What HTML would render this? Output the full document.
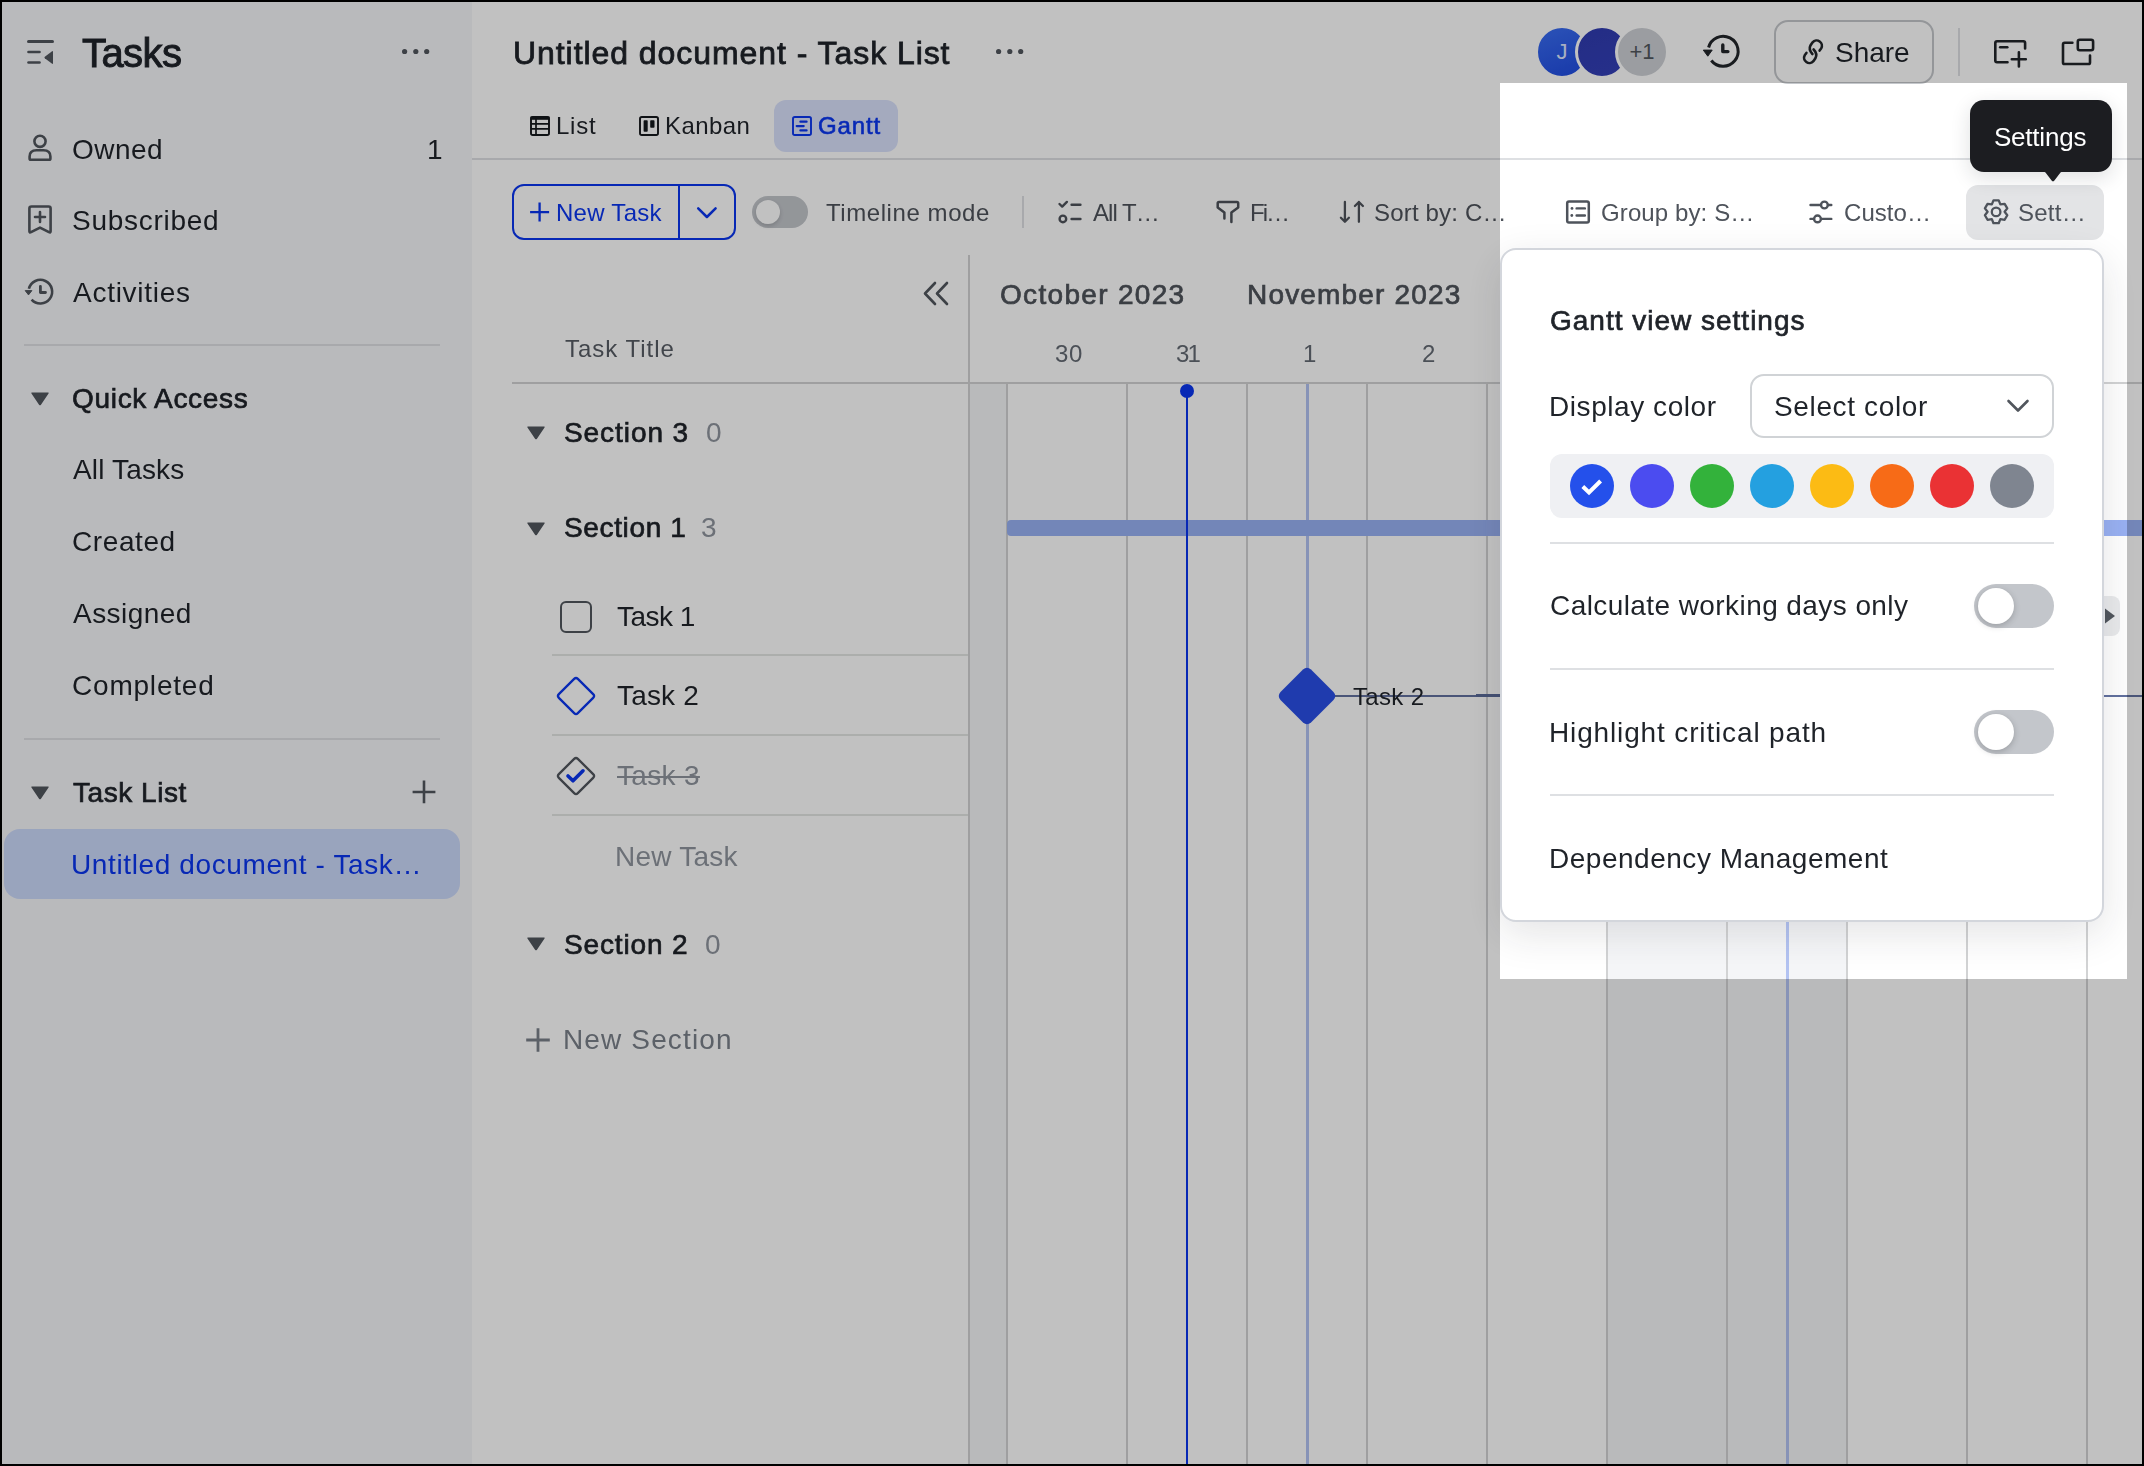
<!DOCTYPE html>
<html><head><meta charset="utf-8"><style>
html,body{margin:0;padding:0}
body{width:2144px;height:1466px;overflow:hidden;position:relative;background:#fff;font-family:"Liberation Sans",sans-serif}
.a{position:absolute}
.t{position:absolute;white-space:nowrap;line-height:1;will-change:transform}
</style></head><body>
<div class="a" style="left:0px;top:0px;width:472px;height:1466px;background:#f5f6f9"></div>
<svg class="a" style="left:24px;top:36px;" width="32" height="32" viewBox="0 0 32 32">
<path d="M4.5 5.5H28.5" stroke="#51565d" stroke-width="3" stroke-linecap="round"/>
<path d="M4.5 16H15.5" stroke="#51565d" stroke-width="2.6" stroke-linecap="round"/>
<path d="M4.5 26.5H15.5" stroke="#51565d" stroke-width="2.6" stroke-linecap="round"/>
<path d="M29 15.5V27Q29 28.5 27.8 27.6L20.8 22.3Q20 21.5 20.8 20.8L27.8 15.4Q29 14.5 29 15.5Z" fill="#51565d"/>
</svg>
<div id="t1" class="t" style="left:81.50px;top:33.14px;font-size:40px;color:#1f2329;font-weight:400;letter-spacing:-0.562px;-webkit-text-stroke:1.00px #1f2329;">Tasks</div>
<svg class="a" style="left:398px;top:45px;" width="36" height="14" viewBox="0 0 36 14"><circle cx="6.6" cy="6.5" r="2.6" fill="#51565d"/><circle cx="17.8" cy="6.5" r="2.6" fill="#51565d"/><circle cx="28.7" cy="6.5" r="2.6" fill="#51565d"/></svg>
<svg class="a" style="left:26px;top:132px;" width="28" height="32" viewBox="0 0 28 32">
<circle cx="14" cy="9.3" r="5.6" fill="none" stroke="#51565d" stroke-width="2.6"/>
<path d="M3.6 26.5V24.5Q3.6 18.3 10.5 18.3H17.5Q24.4 18.3 24.4 24.5V26.5Q24.4 27.8 23.1 27.8H4.9Q3.6 27.8 3.6 26.5Z" fill="none" stroke="#51565d" stroke-width="2.6"/>
</svg>
<div id="t2" class="t" style="left:72.00px;top:135.60px;font-size:28px;color:#1f2329;font-weight:400;letter-spacing:0.464px;">Owned</div>
<div id="t3" class="t" style="left:426.50px;top:135.60px;font-size:28px;color:#1f2329;font-weight:400;letter-spacing:0.000px;">1</div>
<svg class="a" style="left:26px;top:203px;" width="28" height="34" viewBox="0 0 28 34">
<path d="M5.5 3.5H22.6Q24.6 3.5 24.6 5.5V28.3Q24.6 30 23 29.2L14 24.6L5 29.2Q3.4 30 3.4 28.3V5.5Q3.4 3.5 5.5 3.5Z" fill="none" stroke="#51565d" stroke-width="2.6" stroke-linejoin="round"/>
<path d="M14 9V19M9 14H19" stroke="#51565d" stroke-width="2.6" stroke-linecap="round"/>
</svg>
<div id="t4" class="t" style="left:72.00px;top:207.10px;font-size:28px;color:#1f2329;font-weight:400;letter-spacing:0.721px;">Subscribed</div>
<svg class="a" style="left:24px;top:276px;" width="32" height="32" viewBox="0 0 32 32">
<path d="M7.6 23.6A11.8 11.8 0 1 0 4.9 12.8" fill="none" stroke="#51565d" stroke-width="2.6"/>
<path d="M1.2 14.6H7.9L4.5 18.9Z" fill="#51565d" stroke="#51565d" stroke-width="1" stroke-linejoin="round"/>
<path d="M16.4 10.3V16.5H21.5" fill="none" stroke="#51565d" stroke-width="2.8" stroke-linecap="round" stroke-linejoin="round"/>
</svg>
<div id="t5" class="t" style="left:73.00px;top:278.80px;font-size:28px;color:#1f2329;font-weight:400;letter-spacing:0.726px;">Activities</div>
<div class="a" style="left:24px;top:344px;width:416px;height:2px;background:#dee0e3"></div>
<svg class="a" style="left:30px;top:390.6px;" width="20" height="16" viewBox="0 0 20 16"><path d="M1.95 1.5H18.05Q19.25 1.5 18.55 2.5L10.8 13.9Q10 14.8 9.2 13.9L1.45 2.5Q0.75 1.5 1.95 1.5Z" fill="#51565d"/></svg>
<div id="t6" class="t" style="left:72.35px;top:384.60px;font-size:28px;color:#1f2329;font-weight:400;letter-spacing:0.700px;-webkit-text-stroke:0.70px #1f2329;">Quick Access</div>
<div id="t7" class="t" style="left:73.00px;top:456.30px;font-size:28px;color:#1f2329;font-weight:400;letter-spacing:0.166px;">All Tasks</div>
<div id="t8" class="t" style="left:72.00px;top:528.10px;font-size:28px;color:#1f2329;font-weight:400;letter-spacing:0.593px;">Created</div>
<div id="t9" class="t" style="left:73.00px;top:600.10px;font-size:28px;color:#1f2329;font-weight:400;letter-spacing:0.455px;">Assigned</div>
<div id="t10" class="t" style="left:72.00px;top:672.20px;font-size:28px;color:#1f2329;font-weight:400;letter-spacing:0.796px;">Completed</div>
<div class="a" style="left:24px;top:738px;width:416px;height:2px;background:#dee0e3"></div>
<svg class="a" style="left:30px;top:784.6px;" width="20" height="16" viewBox="0 0 20 16"><path d="M1.95 1.5H18.05Q19.25 1.5 18.55 2.5L10.8 13.9Q10 14.8 9.2 13.9L1.45 2.5Q0.75 1.5 1.95 1.5Z" fill="#51565d"/></svg>
<div id="t11" class="t" style="left:73.35px;top:778.70px;font-size:28px;color:#1f2329;font-weight:400;letter-spacing:0.544px;-webkit-text-stroke:0.70px #1f2329;">Task List</div>
<svg class="a" style="left:410px;top:778px;" width="28" height="28" viewBox="0 0 28 28"><path d="M14 2.4V25.3M2.6 14H25.4" stroke="#51565d" stroke-width="2.6"/></svg>
<div class="a" style="left:4px;top:829px;width:456px;height:70px;background:#cbd9fa;border-radius:16px"></div>
<div id="t12" class="t" style="left:71.00px;top:850.80px;font-size:28px;color:#0a36f0;font-weight:400;letter-spacing:0.619px;">Untitled document - Task…</div>
<div id="t13" class="t" style="left:513.40px;top:36.91px;font-size:32px;color:#1f2329;font-weight:400;letter-spacing:0.937px;-webkit-text-stroke:0.80px #1f2329;">Untitled document - Task List</div>
<svg class="a" style="left:992px;top:45px;" width="36" height="14" viewBox="0 0 36 14"><circle cx="6.6" cy="6.5" r="2.6" fill="#51565d"/><circle cx="17.8" cy="6.5" r="2.6" fill="#51565d"/><circle cx="28.7" cy="6.5" r="2.6" fill="#51565d"/></svg>
<svg class="a" style="left:526px;top:112px;" width="28" height="28" viewBox="526 112 28 28">
<rect x="531" y="117" width="18" height="18" rx="1.8" fill="none" stroke="#15181c" stroke-width="1.9"/>
<rect x="530.5" y="116.5" width="19" height="3.3" fill="#15181c"/>
<path d="M531 123.9H549M531 128.9H549M536 117V135" stroke="#15181c" stroke-width="1.7"/>
</svg>
<div id="t14" class="t" style="left:556.00px;top:114.38px;font-size:24px;color:#1f2329;font-weight:400;letter-spacing:0.773px;">List</div>
<svg class="a" style="left:635px;top:112px;" width="28" height="28" viewBox="635 112 28 28">
<rect x="640" y="117" width="18" height="18" rx="1.8" fill="none" stroke="#15181c" stroke-width="1.9"/>
<rect x="643.6" y="120.2" width="4.1" height="11.5" rx="0.8" fill="#15181c"/>
<rect x="650.2" y="120.2" width="4.3" height="7.6" rx="0.8" fill="#15181c"/>
</svg>
<div id="t15" class="t" style="left:665.00px;top:114.38px;font-size:24px;color:#1f2329;font-weight:400;letter-spacing:0.440px;">Kanban</div>
<div class="a" style="left:774px;top:100px;width:124px;height:52px;background:#d9e1fc;border-radius:12px"></div>
<svg class="a" style="left:788px;top:112px;" width="28" height="28" viewBox="788 112 28 28">
<rect x="793" y="117" width="18" height="18" rx="1.8" fill="none" stroke="#0a36f0" stroke-width="1.9"/>
<path d="M800.4 121.7H806.6M796.7 126.1H803.7M800.4 130.4H806.6" stroke="#0a36f0" stroke-width="2.2" stroke-linecap="round"/>
</svg>
<div id="t16" class="t" style="left:818.30px;top:114.38px;font-size:24px;color:#0a36f0;font-weight:400;letter-spacing:0.842px;-webkit-text-stroke:0.60px #0a36f0;">Gantt</div>
<div class="a" style="left:472px;top:158px;width:1672px;height:2px;background:#dee0e3"></div>
<div class="a" style="left:1535px;top:25px;width:48px;height:48px;border-radius:50%;border:3px solid #fff;background:linear-gradient(160deg,#3a6df2,#1f4be0);color:#dfe8ff;font-size:22px;line-height:48px;text-align:center">J</div>
<div class="a" style="left:1575px;top:25px;width:48px;height:48px;border-radius:50%;border:3px solid #fff;background:linear-gradient(160deg,#2f3bb0,#3440b8);color:#fff;font-size:22px;line-height:48px;text-align:center"></div>
<div class="a" style="left:1615px;top:25px;width:48px;height:48px;border-radius:50%;border:3px solid #fff;background:#cdd0d5;color:#51565d;font-size:22px;line-height:48px;text-align:center">+1</div>
<svg class="a" style="left:1698px;top:30px;" width="48" height="44" viewBox="1698 30 48 44">
<path d="M1711.3 60.5A15 15 0 1 0 1708.6 47.5" fill="none" stroke="#22252a" stroke-width="3"/>
<path d="M1703.3 50.1H1712.2L1707.8 56.2Z" fill="#22252a" stroke="#22252a" stroke-width="1" stroke-linejoin="round"/>
<path d="M1722.8 45V51.6H1727.9" fill="none" stroke="#22252a" stroke-width="3.4" stroke-linecap="round" stroke-linejoin="round"/>
</svg>
<div class="a" style="left:1774px;top:20px;width:160px;height:64px;border:2px solid #c4c7cb;border-radius:14px;box-sizing:border-box"></div>
<svg class="a" style="left:1798px;top:36px;" width="30" height="32" viewBox="1798 36 30 32">
<path d="M1819.6 50.6L1821.2 48.4A5.3 5.3 0 0 0 1812.6 42.3L1810.6 45.2Q1808.2 49.6 1812.4 54" fill="none" stroke="#22252a" stroke-width="2.6" stroke-linecap="round"/>
<path d="M1806.4 52.9L1804.8 55.1A5.3 5.3 0 0 0 1813.4 61.2L1815.4 58.3Q1817.8 53.9 1813.6 49.5" fill="none" stroke="#22252a" stroke-width="2.6" stroke-linecap="round"/>
</svg>
<div id="t17" class="t" style="left:1834.50px;top:38.50px;font-size:28px;color:#1f2329;font-weight:400;letter-spacing:-0.036px;">Share</div>
<div class="a" style="left:1958px;top:28px;width:2px;height:48px;background:#dee0e3"></div>
<svg class="a" style="left:1988px;top:34px;" width="44" height="38" viewBox="1988 34 44 38">
<path d="M2007.5 62.3H1997Q1995.3 62.3 1995.3 60.6V43Q1995.3 41.3 1997 41.3H2023.4Q2025.1 41.3 2025.1 43V48.5" fill="none" stroke="#22252a" stroke-width="2.6" stroke-linecap="round"/>
<path d="M2000.2 47.3H2007.3" stroke="#22252a" stroke-width="2.6" stroke-linecap="round"/>
<path d="M2018.9 52.3V66.4M2011.8 59.2H2025.8" stroke="#22252a" stroke-width="2.6" stroke-linecap="round"/>
</svg>
<svg class="a" style="left:2056px;top:34px;" width="44" height="38" viewBox="2056 34 44 38">
<path d="M2072.4 42.8H2064.6Q2063 42.8 2063 44.4V62.4Q2063 64 2064.6 64H2088.4Q2090 64 2090 62.4V55.6" fill="none" stroke="#22252a" stroke-width="2.6" stroke-linecap="round"/>
<rect x="2077.8" y="39.7" width="15.3" height="10.5" rx="2" fill="none" stroke="#22252a" stroke-width="2.6"/>
</svg>
<div class="a" style="left:512px;top:184px;width:224px;height:56px;border:2px solid #0a36f0;border-radius:12px;box-sizing:border-box"></div>
<div class="a" style="left:678px;top:184px;width:2px;height:56px;background:#0a36f0"></div>
<svg class="a" style="left:524px;top:198px;" width="32" height="30" viewBox="524 198 32 30"><path d="M539.6 202.6V221.6M530.1 212.1H549.1" stroke="#0a36f0" stroke-width="2.3"/></svg>
<div id="t18" class="t" style="left:556.30px;top:200.88px;font-size:24px;color:#0a36f0;font-weight:400;letter-spacing:0.282px;">New Task</div>
<svg class="a" style="left:690px;top:200px;" width="34" height="26" viewBox="690 200 34 26"><path d="M698.2 208.3L706.9 217L715.6 208.3" fill="none" stroke="#0a36f0" stroke-width="2.5" stroke-linecap="round" stroke-linejoin="round"/></svg>
<div class="a" style="left:752px;top:196px;width:56px;height:32px;border-radius:16px;background:#c3c6cb"></div>
<div class="a" style="left:756px;top:200px;width:24px;height:24px;border-radius:50%;background:#fff;box-shadow:0 2px 4px rgba(31,35,41,.2)"></div>
<div id="t19" class="t" style="left:825.50px;top:200.68px;font-size:24px;color:#4e535b;font-weight:400;letter-spacing:0.570px;">Timeline mode</div>
<div class="a" style="left:1022px;top:196px;width:2px;height:32px;background:#dee0e3"></div>
<svg class="a" style="left:1052px;top:194px;" width="36" height="36" viewBox="1052 194 36 36">
<path d="M1059.5 204L1062.2 206.6L1066.9 201.9" fill="none" stroke="#4e535b" stroke-width="2.4" stroke-linecap="round" stroke-linejoin="round"/>
<path d="M1071.6 204.7H1080.4M1071.6 218.9H1080.4" stroke="#4e535b" stroke-width="2.5" stroke-linecap="round"/>
<circle cx="1062.9" cy="218.9" r="3.3" fill="none" stroke="#4e535b" stroke-width="2.4"/>
</svg>
<div id="t20" class="t" style="left:1093.20px;top:201.38px;font-size:24px;color:#4e535b;font-weight:400;letter-spacing:-0.960px;">All T…</div>
<svg class="a" style="left:1210px;top:194px;" width="36" height="36" viewBox="1210 194 36 36">
<path d="M1231.4 222V212.6L1238.2 207.6V203.2Q1238.2 201.9 1236.9 201.9H1219Q1217.7 201.9 1217.7 203.2V207.6L1224.4 212.6V218.4" fill="none" stroke="#4e535b" stroke-width="2.5" stroke-linecap="round" stroke-linejoin="round"/>
</svg>
<div id="t21" class="t" style="left:1250.00px;top:201.38px;font-size:24px;color:#4e535b;font-weight:400;letter-spacing:-1.996px;">Fi…</div>
<svg class="a" style="left:1334px;top:194px;" width="36" height="36" viewBox="1334 194 36 36">
<path d="M1344.9 202V221.8M1340.9 217.8L1344.9 221.8L1348.9 217.8" fill="none" stroke="#4e535b" stroke-width="2.3" stroke-linecap="round" stroke-linejoin="round"/>
<path d="M1358.9 221.8V202M1354.9 206L1358.9 202L1362.9 206" fill="none" stroke="#4e535b" stroke-width="2.3" stroke-linecap="round" stroke-linejoin="round"/>
</svg>
<div id="t22" class="t" style="left:1374.30px;top:201.38px;font-size:24px;color:#4e535b;font-weight:400;letter-spacing:0.180px;">Sort by: C…</div>
<svg class="a" style="left:1560px;top:194px;" width="36" height="36" viewBox="1560 194 36 36">
<rect x="1567.2" y="201.4" width="21.6" height="21.2" rx="1.8" fill="none" stroke="#4e535b" stroke-width="2.5"/>
<circle cx="1572" cy="208.4" r="1.4" fill="#4e535b"/><circle cx="1571.8" cy="215.5" r="1.4" fill="#4e535b"/>
<path d="M1576.6 208.4H1584.9M1576.6 215.5H1584.9" stroke="#4e535b" stroke-width="2.4" stroke-linecap="round"/>
</svg>
<div id="t23" class="t" style="left:1600.50px;top:201.38px;font-size:24px;color:#4e535b;font-weight:400;letter-spacing:0.113px;">Group by: S…</div>
<svg class="a" style="left:1804px;top:194px;" width="36" height="36" viewBox="1804 194 36 36">
<path d="M1810.5 205H1820.2M1828.6 205H1831.3M1810.5 218.9H1813.3M1821.7 218.9H1831.3" stroke="#4e535b" stroke-width="2.4" stroke-linecap="round"/>
<circle cx="1824.4" cy="205" r="3.4" fill="none" stroke="#4e535b" stroke-width="2.4"/>
<circle cx="1817.5" cy="218.9" r="3.4" fill="none" stroke="#4e535b" stroke-width="2.4"/>
</svg>
<div id="t24" class="t" style="left:1843.50px;top:201.38px;font-size:24px;color:#4e535b;font-weight:400;letter-spacing:0.061px;">Custo…</div>
<div class="a" style="left:1966px;top:185px;width:138px;height:55px;background:#e3e4e6;border-radius:12px"></div>
<svg class="a" style="left:1980px;top:196px;" width="32" height="32" viewBox="1980 196 32 32">
<path d="M1993.47 200.40L1998.73 200.40L2000.35 204.44L2004.66 203.82L2007.29 208.38L2004.60 211.80L2007.29 215.22L2004.66 219.78L2000.35 219.16L1998.73 223.20L1993.47 223.20L1991.85 219.16L1987.54 219.78L1984.91 215.22L1987.60 211.80L1984.91 208.38L1987.54 203.82L1991.85 204.44Z" fill="none" stroke="#4e535b" stroke-width="2.3" stroke-linejoin="round"/>
<circle cx="1996.1" cy="211.9" r="4.3" fill="none" stroke="#4e535b" stroke-width="2.3"/>
</svg>
<div id="t25" class="t" style="left:2018.00px;top:201.38px;font-size:24px;color:#4e535b;font-weight:400;letter-spacing:0.252px;">Sett…</div>
<svg class="a" style="left:920px;top:280px;" width="32" height="28" viewBox="0 0 32 28"><path d="M15 3L5 13.5L15 24M27 3L17 13.5L27 24" fill="none" stroke="#51565d" stroke-width="2.6" stroke-linecap="round" stroke-linejoin="round"/></svg>
<div id="t26" class="t" style="left:565.00px;top:336.98px;font-size:24px;color:#575c64;font-weight:400;letter-spacing:0.987px;">Task Title</div>
<div class="a" style="left:512px;top:382px;width:1632px;height:2px;background:#d2d3d4"></div>
<div class="a" style="left:968px;top:255px;width:2px;height:1211px;background:#d2d3d4"></div>
<svg class="a" style="left:526px;top:424.8px;" width="20" height="16" viewBox="0 0 20 16"><path d="M1.95 1.5H18.05Q19.25 1.5 18.55 2.5L10.8 13.9Q10 14.8 9.2 13.9L1.45 2.5Q0.75 1.5 1.95 1.5Z" fill="#51565d"/></svg>
<div id="t27" class="t" style="left:564.35px;top:418.90px;font-size:28px;color:#1f2329;font-weight:400;letter-spacing:0.929px;-webkit-text-stroke:0.70px #1f2329;">Section 3</div>
<div id="t28" class="t" style="left:705.50px;top:418.90px;font-size:28px;color:#8f959e;font-weight:400;letter-spacing:0.000px;">0</div>
<svg class="a" style="left:526px;top:520.6px;" width="20" height="16" viewBox="0 0 20 16"><path d="M1.95 1.5H18.05Q19.25 1.5 18.55 2.5L10.8 13.9Q10 14.8 9.2 13.9L1.45 2.5Q0.75 1.5 1.95 1.5Z" fill="#51565d"/></svg>
<div id="t29" class="t" style="left:564.35px;top:514.20px;font-size:28px;color:#1f2329;font-weight:400;letter-spacing:0.641px;-webkit-text-stroke:0.70px #1f2329;">Section 1</div>
<div id="t30" class="t" style="left:701.00px;top:514.20px;font-size:28px;color:#8f959e;font-weight:400;letter-spacing:0.000px;">3</div>
<div class="a" style="left:560px;top:601px;width:32px;height:32px;border:2.4px solid #51565d;border-radius:6px;box-sizing:border-box"></div>
<div id="t31" class="t" style="left:617.00px;top:602.60px;font-size:28px;color:#1f2329;font-weight:400;letter-spacing:-0.510px;">Task 1</div>
<div class="a" style="left:552px;top:654px;width:416px;height:2px;background:#e4e6e4"></div>
<svg class="a" style="left:553.9px;top:673.9px;" width="44" height="44" viewBox="0 0 44 44"><path d="M20.16 4.84Q22.00 3.00 23.84 4.84L39.16 20.16Q41.00 22.00 39.16 23.84L23.84 39.16Q22.00 41.00 20.16 39.16L4.84 23.84Q3.00 22.00 4.84 20.16Z" fill="none" stroke="#0a36f0" stroke-width="2.3"/></svg>
<div id="t32" class="t" style="left:617.00px;top:682.00px;font-size:28px;color:#1f2329;font-weight:400;letter-spacing:0.170px;">Task 2</div>
<div class="a" style="left:552px;top:734px;width:416px;height:2px;background:#e4e6e4"></div>
<svg class="a" style="left:553.9px;top:753.9px;" width="44" height="44" viewBox="0 0 44 44"><path d="M20.16 4.84Q22.00 3.00 23.84 4.84L39.16 20.16Q41.00 22.00 39.16 23.84L23.84 39.16Q22.00 41.00 20.16 39.16L4.84 23.84Q3.00 22.00 4.84 20.16Z" fill="none" stroke="#51565d" stroke-width="2.3"/>
<path d="M14 22L19 26.8L29 16.8" fill="none" stroke="#0a36f0" stroke-width="3.6" stroke-linecap="round" stroke-linejoin="round"/></svg>
<div id="t33" class="t" style="left:617.00px;top:762.10px;font-size:28px;color:#8f959e;font-weight:400;letter-spacing:0.330px;text-decoration:line-through;text-decoration-thickness:2px">Task 3</div>
<div class="a" style="left:552px;top:814px;width:416px;height:2px;background:#e4e6e4"></div>
<div id="t34" class="t" style="left:615.00px;top:842.90px;font-size:28px;color:#8f959e;font-weight:400;letter-spacing:0.234px;">New Task</div>
<svg class="a" style="left:526px;top:936.3px;" width="20" height="16" viewBox="0 0 20 16"><path d="M1.95 1.5H18.05Q19.25 1.5 18.55 2.5L10.8 13.9Q10 14.8 9.2 13.9L1.45 2.5Q0.75 1.5 1.95 1.5Z" fill="#51565d"/></svg>
<div id="t35" class="t" style="left:564.35px;top:930.90px;font-size:28px;color:#1f2329;font-weight:400;letter-spacing:0.854px;-webkit-text-stroke:0.70px #1f2329;">Section 2</div>
<div id="t36" class="t" style="left:704.70px;top:930.90px;font-size:28px;color:#8f959e;font-weight:400;letter-spacing:0.000px;">0</div>
<svg class="a" style="left:524px;top:1026px;" width="28" height="28" viewBox="0 0 28 28"><path d="M14 2.2V25.8M2.2 14H25.8" stroke="#7a808a" stroke-width="2.8"/></svg>
<div id="t37" class="t" style="left:562.60px;top:1026.30px;font-size:28px;color:#7a808a;font-weight:400;letter-spacing:1.139px;">New Section</div>
<div class="a" style="left:970px;top:384px;width:37px;height:1082px;background:#f5f6f8"></div>
<div class="a" style="left:1607px;top:384px;width:240px;height:1082px;background:#f5f6f8"></div>
<div class="a" style="left:1006px;top:384px;width:2px;height:1082px;background:#d2d3d4"></div>
<div class="a" style="left:1126px;top:384px;width:2px;height:1082px;background:#d2d3d4"></div>
<div class="a" style="left:1246px;top:384px;width:2px;height:1082px;background:#d2d3d4"></div>
<div class="a" style="left:1366px;top:384px;width:2px;height:1082px;background:#d2d3d4"></div>
<div class="a" style="left:1486px;top:384px;width:2px;height:1082px;background:#d2d3d4"></div>
<div class="a" style="left:1606px;top:384px;width:2px;height:1082px;background:#d2d3d4"></div>
<div class="a" style="left:1726px;top:384px;width:2px;height:1082px;background:#d2d3d4"></div>
<div class="a" style="left:1846px;top:384px;width:2px;height:1082px;background:#d2d3d4"></div>
<div class="a" style="left:1966px;top:384px;width:2px;height:1082px;background:#d2d3d4"></div>
<div class="a" style="left:2086px;top:384px;width:2px;height:1082px;background:#d2d3d4"></div>
<div id="t38" class="t" style="left:1000.35px;top:280.90px;font-size:28px;color:#4e535a;font-weight:400;letter-spacing:1.319px;-webkit-text-stroke:0.70px #4e535a;">October 2023</div>
<div id="t39" class="t" style="left:1247.05px;top:280.90px;font-size:28px;color:#4e535a;font-weight:400;letter-spacing:1.179px;-webkit-text-stroke:0.70px #4e535a;">November 2023</div>
<div id="t40" class="t" style="left:1054.60px;top:341.68px;font-size:24px;color:#646a73;font-weight:400;letter-spacing:0.652px;">30</div>
<div id="t41" class="t" style="left:1176.30px;top:341.68px;font-size:24px;color:#646a73;font-weight:400;letter-spacing:-1.948px;">31</div>
<div id="t42" class="t" style="left:1302.70px;top:341.68px;font-size:24px;color:#646a73;font-weight:400;letter-spacing:0.000px;">1</div>
<div id="t43" class="t" style="left:1421.60px;top:341.68px;font-size:24px;color:#646a73;font-weight:400;letter-spacing:0.000px;">2</div>
<div class="a" style="left:1306px;top:384px;width:3px;height:1082px;background:#b3c3f2"></div>
<div class="a" style="left:1786px;top:384px;width:3px;height:1082px;background:#b3c3f2"></div>
<div class="a" style="left:1007px;top:520px;width:1137px;height:16px;background:#99b1f3;border-radius:4px 0 0 4px"></div>
<div class="a" style="left:1186px;top:391px;width:2px;height:1075px;background:#0a36f0"></div>
<div class="a" style="left:1180px;top:384px;width:14px;height:14px;border-radius:50%;background:#0a36f0"></div>
<div class="a" style="left:1335px;top:695px;width:809px;height:2px;background:#62719f"></div>
<svg class="a" style="left:1277px;top:666px;" width="60" height="60" viewBox="0 0 60 60"><path d="M26 3.5Q30 0 34 3.5L56.5 26Q60 30 56.5 34L34 56.5Q30 60 26 56.5L3.5 34Q0 30 3.5 26Z" fill="#2a4fe6"/></svg>
<div id="t44" class="t" style="left:1353.00px;top:684.68px;font-size:24px;color:#1f2329;font-weight:400;letter-spacing:0.337px;">Task 2</div>
<div class="a" style="left:1476px;top:694px;width:24px;height:3px;background:#5a6a98"></div>
<div class="a" style="left:1500px;top:83px;width:627px;height:896px;box-shadow:0 0 0 3000px rgba(0,0,0,0.243)"></div>
<div class="a" style="left:2096px;top:596px;width:24px;height:40px;border-radius:8px;background:#e9eaec"></div>
<svg class="a" style="left:2102px;top:606px;" width="16" height="20" viewBox="0 0 16 20"><path d="M3 2.5L13 10L3 17.5Z" fill="#51565d"/></svg>
<div class="a" style="left:1500px;top:248px;width:604px;height:674px;background:#fff;border:2px solid #d3d6dc;border-radius:16px;box-sizing:border-box;box-shadow:0 12px 40px rgba(31,35,41,.12)"></div>
<div id="t45" class="t" style="left:1550.35px;top:306.60px;font-size:28px;color:#1f2329;font-weight:400;letter-spacing:0.997px;-webkit-text-stroke:0.70px #1f2329;">Gantt view settings</div>
<div id="t46" class="t" style="left:1549.00px;top:392.60px;font-size:28px;color:#1f2329;font-weight:400;letter-spacing:0.562px;">Display color</div>
<div class="a" style="left:1750px;top:374px;width:304px;height:64px;border:2px solid #d0d3d6;border-radius:14px;box-sizing:border-box"></div>
<div id="t47" class="t" style="left:1774.20px;top:392.60px;font-size:28px;color:#1f2329;font-weight:400;letter-spacing:0.640px;">Select color</div>
<svg class="a" style="left:2004px;top:396px;" width="28" height="22" viewBox="0 0 28 22"><path d="M4.5 5L14 14.5L23.5 5" fill="none" stroke="#51565d" stroke-width="2.6" stroke-linecap="round" stroke-linejoin="round"/></svg>
<div class="a" style="left:1550px;top:454px;width:504px;height:64px;background:#eff0f3;border-radius:12px"></div>
<div class="a" style="left:1570px;top:464px;width:44px;height:44px;border-radius:50%;background:#2450eb"></div>
<div class="a" style="left:1630px;top:464px;width:44px;height:44px;border-radius:50%;background:#4b4cf0"></div>
<div class="a" style="left:1690px;top:464px;width:44px;height:44px;border-radius:50%;background:#33b23b"></div>
<div class="a" style="left:1750px;top:464px;width:44px;height:44px;border-radius:50%;background:#24a0e0"></div>
<div class="a" style="left:1810px;top:464px;width:44px;height:44px;border-radius:50%;background:#fcbb14"></div>
<div class="a" style="left:1870px;top:464px;width:44px;height:44px;border-radius:50%;background:#f76b17"></div>
<div class="a" style="left:1930px;top:464px;width:44px;height:44px;border-radius:50%;background:#ea3234"></div>
<div class="a" style="left:1990px;top:464px;width:44px;height:44px;border-radius:50%;background:#7f8590"></div>
<svg class="a" style="left:1578px;top:474px;" width="28" height="24" viewBox="0 0 28 24"><path d="M4.8 12.5L11 18.5L22.6 7" fill="none" stroke="#fff" stroke-width="4"/></svg>
<div class="a" style="left:1550px;top:542px;width:504px;height:2px;background:#dee0e3"></div>
<div id="t48" class="t" style="left:1550.00px;top:592.10px;font-size:28px;color:#1f2329;font-weight:400;letter-spacing:0.421px;">Calculate working days only</div>
<div class="a" style="left:1974px;top:584px;width:80px;height:44px;border-radius:22px;background:#c3c6cb"></div>
<div class="a" style="left:1978px;top:588px;width:36px;height:36px;border-radius:50%;background:#fff;box-shadow:0 2px 6px rgba(31,35,41,.25)"></div>
<div class="a" style="left:1550px;top:668px;width:504px;height:2px;background:#dee0e3"></div>
<div id="t49" class="t" style="left:1549.00px;top:718.50px;font-size:28px;color:#1f2329;font-weight:400;letter-spacing:0.856px;">Highlight critical path</div>
<div class="a" style="left:1974px;top:710px;width:80px;height:44px;border-radius:22px;background:#c3c6cb"></div>
<div class="a" style="left:1978px;top:714px;width:36px;height:36px;border-radius:50%;background:#fff;box-shadow:0 2px 6px rgba(31,35,41,.25)"></div>
<div class="a" style="left:1550px;top:794px;width:504px;height:2px;background:#dee0e3"></div>
<div id="t50" class="t" style="left:1549.00px;top:844.50px;font-size:28px;color:#1f2329;font-weight:400;letter-spacing:0.517px;">Dependency Management</div>
<div class="a" style="left:1970px;top:100px;width:142px;height:72px;background:#1c1d21;border-radius:14px;box-shadow:0 6px 20px rgba(31,35,41,.14)"></div>
<svg class="a" style="left:2039px;top:170px;" width="28" height="14" viewBox="0 0 28 14"><path d="M0 0Q4 0 6.5 2.6L12.6 10.5Q14 12.2 15.4 10.5L21.5 2.6Q24 0 28 0Z" fill="#1c1d21"/></svg>
<div id="t51" class="t" style="left:1994.00px;top:123.69px;font-size:26px;color:#fff;font-weight:400;letter-spacing:-0.221px;">Settings</div>
<div class="a" style="left:0px;top:0px;width:2144px;height:2px;background:#000"></div>
<div class="a" style="left:0px;top:1464px;width:2144px;height:2px;background:#000"></div>
<div class="a" style="left:0px;top:0px;width:2px;height:1466px;background:#000"></div>
<div class="a" style="left:2142px;top:0px;width:2px;height:1466px;background:#000"></div>
</body></html>
